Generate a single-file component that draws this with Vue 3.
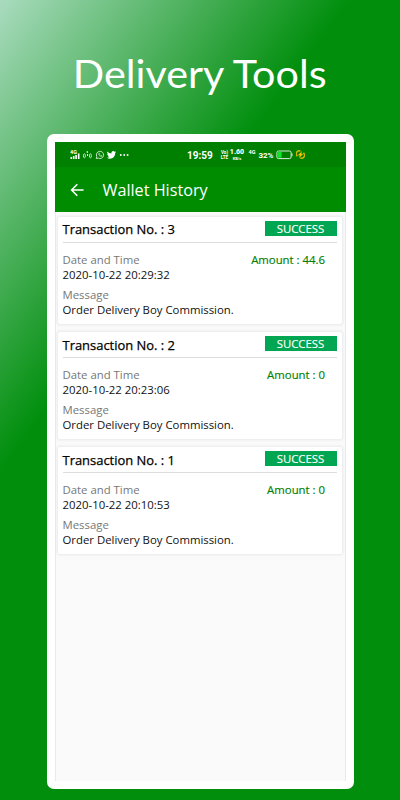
<script setup>
const transactions = [
  { no: 3, time: '2020-10-22 20:29:32', amount: '44.6' },
  { no: 2, time: '2020-10-22 20:23:06', amount: '0' },
  { no: 1, time: '2020-10-22 20:10:53', amount: '0' },
]
</script>

<template>
  <main class="promo">
    <h1 class="headline">Delivery Tools</h1>
    <section class="device">
      <div class="screen">
        <div class="status">
          <svg class="left-icons" width="60" height="12" viewBox="0 0 60 12">
            <text x="0" y="5.2" class="tiny">4G</text>
            <g fill="#fff">
              <rect x="0.5" y="8" width="1.6" height="2" />
              <rect x="2.9" y="7" width="1.6" height="3" />
              <rect x="5.3" y="6" width="1.6" height="4" />
              <rect x="7.9" y="4.5" width="1.6" height="5.5" />
              <rect x="16.7" y="2.2" width="1.2" height="1.6" />
              <rect x="17" y="5" width="1" height="2" />
              <circle cx="50.8" cy="6" r="0.95" />
              <circle cx="54.2" cy="6" r="0.95" />
              <circle cx="57.6" cy="6" r="0.95" />
              <path transform="translate(36.8 1.2) scale(.39)" d="M23.95 4.57a10 10 0 0 1-2.82.77 4.96 4.96 0 0 0 2.16-2.72c-.95.55-2 .95-3.13 1.18a4.92 4.92 0 0 0-8.38 4.48C7.69 8.09 4.07 6.13 1.64 3.16a4.92 4.92 0 0 0 1.52 6.57 4.9 4.9 0 0 1-2.23-.61v.06a4.92 4.92 0 0 0 3.95 4.83 5 5 0 0 1-2.21.08 4.94 4.94 0 0 0 4.6 3.42A9.87 9.87 0 0 1 0 19.54a14 14 0 0 0 7.55 2.21c9.05 0 14-7.5 14-13.98l-.02-.64a9.94 9.94 0 0 0 2.42-2.56z" />
            </g>
            <g fill="none" stroke="#fff" stroke-width="0.9" opacity=".85">
              <ellipse cx="14.4" cy="6.8" rx="1" ry="2" />
              <ellipse cx="20.4" cy="6.8" rx="1" ry="2" />
              <path d="M26.2 9.6l.6-2a3.6 3.6 0 1 1 1.5 1.5z" />
              <path d="M28.6 4.6c-.1 1.6 1.4 3 3 3l.4-.9-1.1-.6-.6.4-.9-.9.4-.7-.5-.9z" stroke-width=".6" />
            </g>
          </svg>
          <span class="clock">19:59</span>
          <span class="stack volte"><span>Vo)</span><span>LTE</span></span>
          <span class="stack speed"><b>1.60</b><span>KB/s</span></span>
          <span class="net">4G</span>
          <span class="percent">32%</span>
          <svg class="battery" width="17" height="10" viewBox="0 0 17 10">
            <rect x="0.9" y="1" width="14.2" height="7.6" rx="1.6" fill="none" stroke="#d8ecd8" />
            <rect x="1.6" y="1.8" width="4" height="6" rx=".6" fill="#11e32b" />
            <rect x="15.5" y="3.4" width="1" height="2.8" fill="#d8ecd8" />
          </svg>
          <svg class="charge" width="9" height="9" viewBox="0 0 10 10">
            <path d="M1.6 6.8A3.3 3.3 0 0 1 5 1.2M8.2 3.2A3.3 3.3 0 0 1 4.8 8.8" fill="none" stroke="#d8b800" stroke-width="1.6" />
            <path d="M6.8 1L2 5.7h2.2L3.4 9.2l4.6-5H5.7z" fill="#ffc400" />
          </svg>
        </div>
        <header class="appbar">
          <svg width="14" height="14" viewBox="0 0 14 14">
            <path d="M7.3 1.2L1.6 7l5.7 5.8M1.7 7h11.9" fill="none" stroke="#fff" stroke-width="1.6" />
          </svg>
          <h2>Wallet History</h2>
        </header>
        <div class="list">
          <article v-for="t in transactions" :key="t.no" class="card">
            <div class="top">
              <span class="title">Transaction No. : {{ t.no }}</span>
              <span class="badge">SUCCESS</span>
            </div>
            <div class="row">
              <span class="label">Date and Time</span>
              <span class="amount">Amount : {{ t.amount }}</span>
            </div>
            <div class="value">{{ t.time }}</div>
            <div class="label message">Message</div>
            <div class="value">Order Delivery Boy Commission.</div>
          </article>
        </div>
      </div>
    </section>
  </main>
</template>

<style>
body { margin: 0; }
</style>

<style scoped>
.promo {
  box-sizing: border-box;
  width: 400px;
  height: 800px;
  overflow: hidden;
  display: flex;
  flex-direction: column;
  align-items: center;
  background: linear-gradient(126.6deg, #a9dbbe 0, #008e0c 282px);
  font-family: "Open Sans", sans-serif;
}
.headline {
  margin: 0;
  height: 134px;
  box-sizing: border-box;
  padding-top: 49px;
  font: 400 39px/48px Lato, sans-serif;
  color: #fff;
  white-space: nowrap;
  transform: scaleX(1.06);
}
.device {
  box-sizing: border-box;
  width: 307px;
  height: 655px;
  padding: 8px;
  background: #fff;
  border-radius: 7px;
}
.screen {
  box-sizing: border-box;
  height: 639px;
  background: #fafafa;
  border: solid #e2efe4;
  border-width: 0 1px;
}
.status {
  display: flex;
  align-items: center;
  height: 25px;
  margin: 0 -1px;
  background: #008000;
  color: #fff;
  font-family: Roboto, sans-serif;
  white-space: nowrap;
}
.left-icons { margin-left: 15px; flex: none; }
.tiny { font: 700 5.5px Roboto, sans-serif; fill: #fff; }
.clock { width: 33.5px; margin-left: 57.5px; padding-top: 1px; font-size: 10px; font-weight: 700; }
.stack { display: flex; flex-direction: column; align-items: center; font-weight: 700; font-size: 4px; line-height: 5px; }
.stack b { font-size: 7px; line-height: 8px; }
.volte { width: 8px; }
.volte span { font-size: 4.6px; }
.speed { width: 14px; margin-left: 1.5px; margin-top: -1px; }
.net { margin: -5px 0 0 4.5px; font-size: 5.5px; font-weight: 700; }
.percent { margin-left: 3px; padding-top: 1px; font-size: 8px; font-weight: 700; }
.battery { margin-left: 2.5px; }
.charge { margin-left: 3px; }
.appbar {
  display: flex;
  align-items: center;
  height: 45px;
  margin: 0 -1px;
  padding-left: 15px;
  background: #008c00;
}
.appbar h2 { margin: 0 0 0 19px; font-size: 16.2px; font-weight: 400; line-height: 20px; color: #fff; }
.list { display: flex; flex-direction: column; gap: 8.3px; padding: 4.7px 3px 0 2px; }
.card {
  box-sizing: border-box;
  height: 107px;
  padding: 0 5px;
  background: #fff;
  border-radius: 2px;
  box-shadow: 0 0 3px 1px rgba(0, 0, 0, .07);
  color: #111;
  font-size: 11.37px;
}
.top { display: flex; justify-content: space-between; align-items: flex-start; height: 25px; border-bottom: 1px solid #ddd; }
.title { padding-top: 3.6px; font-size: 12.95px; line-height: 18px; color: #000; -webkit-text-stroke: .25px #000; }
.badge {
  width: 72px;
  height: 15px;
  margin-top: 4px;
  background: #00a651;
  color: #fff;
  line-height: 15px;
  text-align: center;
  -webkit-text-stroke: .15px #fff;
}
.row { display: flex; justify-content: space-between; padding: 8.9px 11.5px 0 0; }
.row, .value, .message { line-height: 15px; }
.value { color: #111; }
.label { color: #777; }
.amount { color: #008000; -webkit-text-stroke: .15px #008000; }
.message { margin-top: 5.2px; }
</style>
